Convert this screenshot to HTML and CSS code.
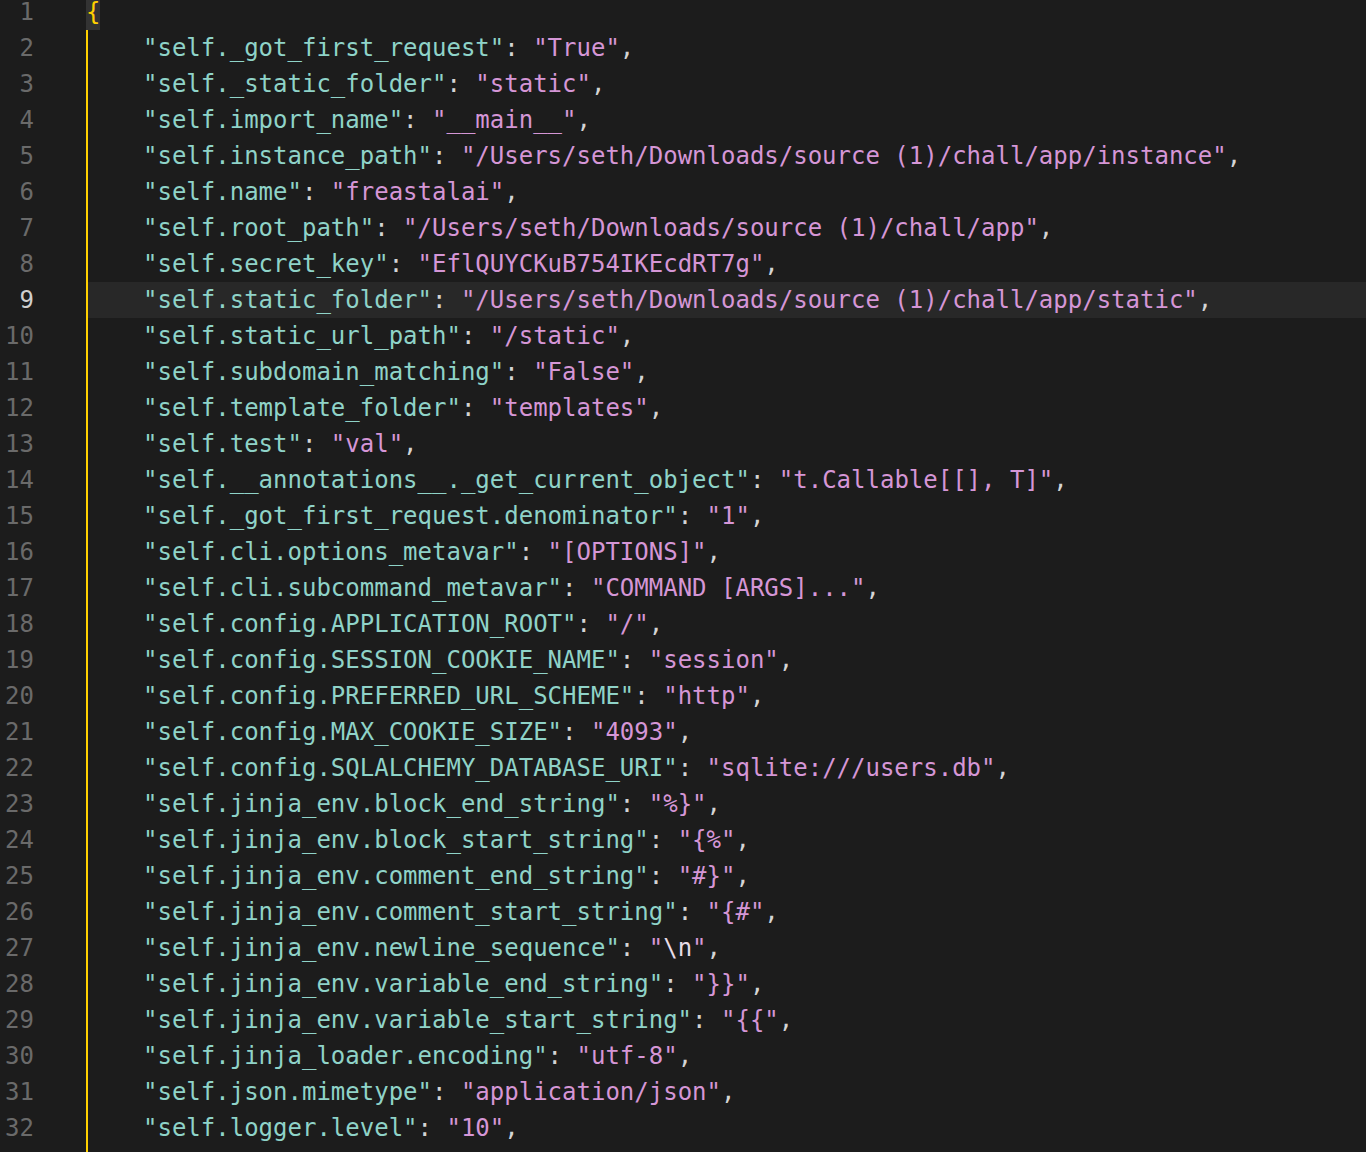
FILE: index.html
```html
<!DOCTYPE html>
<html lang="en">
<head>
<meta charset="utf-8">
<title>editor</title>
<link rel="stylesheet" href="styles.css">
</head>
<body>
<div class="editor">
  <div class="row"><span class="ln">1</span><span class="code first"><span class="brace">{</span></span></div>
  <div class="row"><span class="ln">2</span><span class="code in"><span class="k">"self._got_first_request"</span><span class="p">: </span><span class="s">"True"</span><span class="p">,</span></span></div>
  <div class="row"><span class="ln">3</span><span class="code in"><span class="k">"self._static_folder"</span><span class="p">: </span><span class="s">"static"</span><span class="p">,</span></span></div>
  <div class="row"><span class="ln">4</span><span class="code in"><span class="k">"self.import_name"</span><span class="p">: </span><span class="s">"__main__"</span><span class="p">,</span></span></div>
  <div class="row"><span class="ln">5</span><span class="code in"><span class="k">"self.instance_path"</span><span class="p">: </span><span class="s">"/Users/seth/Downloads/source (1)/chall/app/instance"</span><span class="p">,</span></span></div>
  <div class="row"><span class="ln">6</span><span class="code in"><span class="k">"self.name"</span><span class="p">: </span><span class="s">"freastalai"</span><span class="p">,</span></span></div>
  <div class="row"><span class="ln">7</span><span class="code in"><span class="k">"self.root_path"</span><span class="p">: </span><span class="s">"/Users/seth/Downloads/source (1)/chall/app"</span><span class="p">,</span></span></div>
  <div class="row"><span class="ln">8</span><span class="code in"><span class="k">"self.secret_key"</span><span class="p">: </span><span class="s">"EflQUYCKuB754IKEcdRT7g"</span><span class="p">,</span></span></div>
  <div class="row"><span class="ln active">9</span><span class="code in current"><span class="k">"self.static_folder"</span><span class="p">: </span><span class="s">"/Users/seth/Downloads/source (1)/chall/app/static"</span><span class="p">,</span></span></div>
  <div class="row"><span class="ln">10</span><span class="code in"><span class="k">"self.static_url_path"</span><span class="p">: </span><span class="s">"/static"</span><span class="p">,</span></span></div>
  <div class="row"><span class="ln">11</span><span class="code in"><span class="k">"self.subdomain_matching"</span><span class="p">: </span><span class="s">"False"</span><span class="p">,</span></span></div>
  <div class="row"><span class="ln">12</span><span class="code in"><span class="k">"self.template_folder"</span><span class="p">: </span><span class="s">"templates"</span><span class="p">,</span></span></div>
  <div class="row"><span class="ln">13</span><span class="code in"><span class="k">"self.test"</span><span class="p">: </span><span class="s">"val"</span><span class="p">,</span></span></div>
  <div class="row"><span class="ln">14</span><span class="code in"><span class="k">"self.__annotations__._get_current_object"</span><span class="p">: </span><span class="s">"t.Callable[[], T]"</span><span class="p">,</span></span></div>
  <div class="row"><span class="ln">15</span><span class="code in"><span class="k">"self._got_first_request.denominator"</span><span class="p">: </span><span class="s">"1"</span><span class="p">,</span></span></div>
  <div class="row"><span class="ln">16</span><span class="code in"><span class="k">"self.cli.options_metavar"</span><span class="p">: </span><span class="s">"[OPTIONS]"</span><span class="p">,</span></span></div>
  <div class="row"><span class="ln">17</span><span class="code in"><span class="k">"self.cli.subcommand_metavar"</span><span class="p">: </span><span class="s">"COMMAND [ARGS]..."</span><span class="p">,</span></span></div>
  <div class="row"><span class="ln">18</span><span class="code in"><span class="k">"self.config.APPLICATION_ROOT"</span><span class="p">: </span><span class="s">"/"</span><span class="p">,</span></span></div>
  <div class="row"><span class="ln">19</span><span class="code in"><span class="k">"self.config.SESSION_COOKIE_NAME"</span><span class="p">: </span><span class="s">"session"</span><span class="p">,</span></span></div>
  <div class="row"><span class="ln">20</span><span class="code in"><span class="k">"self.config.PREFERRED_URL_SCHEME"</span><span class="p">: </span><span class="s">"http"</span><span class="p">,</span></span></div>
  <div class="row"><span class="ln">21</span><span class="code in"><span class="k">"self.config.MAX_COOKIE_SIZE"</span><span class="p">: </span><span class="s">"4093"</span><span class="p">,</span></span></div>
  <div class="row"><span class="ln">22</span><span class="code in"><span class="k">"self.config.SQLALCHEMY_DATABASE_URI"</span><span class="p">: </span><span class="s">"sqlite:///users.db"</span><span class="p">,</span></span></div>
  <div class="row"><span class="ln">23</span><span class="code in"><span class="k">"self.jinja_env.block_end_string"</span><span class="p">: </span><span class="s">"%}"</span><span class="p">,</span></span></div>
  <div class="row"><span class="ln">24</span><span class="code in"><span class="k">"self.jinja_env.block_start_string"</span><span class="p">: </span><span class="s">"{%"</span><span class="p">,</span></span></div>
  <div class="row"><span class="ln">25</span><span class="code in"><span class="k">"self.jinja_env.comment_end_string"</span><span class="p">: </span><span class="s">"#}"</span><span class="p">,</span></span></div>
  <div class="row"><span class="ln">26</span><span class="code in"><span class="k">"self.jinja_env.comment_start_string"</span><span class="p">: </span><span class="s">"{#"</span><span class="p">,</span></span></div>
  <div class="row"><span class="ln">27</span><span class="code in"><span class="k">"self.jinja_env.newline_sequence"</span><span class="p">: </span><span class="s">"<span class="e">\n</span>"</span><span class="p">,</span></span></div>
  <div class="row"><span class="ln">28</span><span class="code in"><span class="k">"self.jinja_env.variable_end_string"</span><span class="p">: </span><span class="s">"}}"</span><span class="p">,</span></span></div>
  <div class="row"><span class="ln">29</span><span class="code in"><span class="k">"self.jinja_env.variable_start_string"</span><span class="p">: </span><span class="s">"{{"</span><span class="p">,</span></span></div>
  <div class="row"><span class="ln">30</span><span class="code in"><span class="k">"self.jinja_loader.encoding"</span><span class="p">: </span><span class="s">"utf-8"</span><span class="p">,</span></span></div>
  <div class="row"><span class="ln">31</span><span class="code in"><span class="k">"self.json.mimetype"</span><span class="p">: </span><span class="s">"application/json"</span><span class="p">,</span></span></div>
  <div class="row"><span class="ln">32</span><span class="code in"><span class="k">"self.logger.level"</span><span class="p">: </span><span class="s">"10"</span><span class="p">,</span></span></div>
  <div class="row"><span class="ln"></span><span class="code in"></span></div>
</div>
</body>
</html>
```
FILE: styles.css
```css
html, body {
  margin: 0;
  padding: 0;
  background: #1c1c1c;
  overflow: hidden;
}

.editor {
  margin-top: -6px;
  font-family: "DejaVu Sans Mono", "Liberation Mono", monospace;
  font-size: 24px;
  color: #d4d4d4;
  display: flex;
  flex-direction: column;
}

.row {
  display: flex;
  height: 36px;
  line-height: 36px;
  white-space: pre;
}

.ln {
  width: 34px;
  margin-right: 52px;
  text-align: right;
  color: #6a6a6a;
  flex: none;
}

.ln.active {
  color: #cfcfcf;
}

.code {
  flex: 1;
}

.code.in {
  border-left: 2px solid #ffd000;
  padding-left: 55px;
}

.code.current {
  background: #282828;
}

.brace {
  display: inline-block;
  color: #ffd000;
  background: #333333;
  height: 36px;
}

.k { color: #8fd3c8; }
.p { color: #d4d4d4; }
.s { color: #d596d6; }
.e { color: #e8dce8; }
```
